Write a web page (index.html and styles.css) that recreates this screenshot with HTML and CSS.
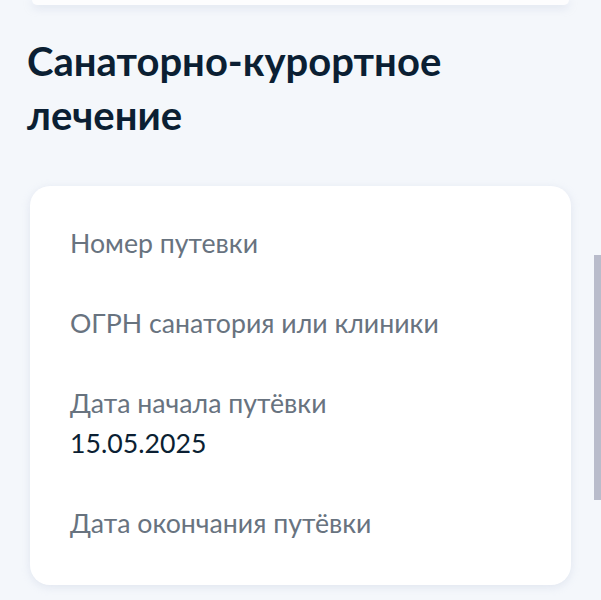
FILE: index.html
```html
<!DOCTYPE html>
<html lang="ru">
<head>
<meta charset="utf-8">
<link rel="stylesheet" href="styles.css">
</head>
<body>
<div class="prev-card"></div>
<h1 class="title">Санаторно-курортное лечение</h1>
<div class="card">
  <div class="field"><div class="label">Номер путевки</div></div>
  <div class="field"><div class="label">ОГРН санатория или клиники</div></div>
  <div class="field"><div class="label">Дата начала путёвки</div><div class="value">15.05.2025</div></div>
  <div class="field"><div class="label">Дата окончания путёвки</div></div>
</div>
<div class="scrollbar"></div>
</body>
</html>
```
FILE: styles.css
```css
html, body {
  margin: 0;
  padding: 0;
}
body {
  background: #f4f7fb;
  font-family: Lato, "Noto Sans", sans-serif;
  width: 601px;
  height: 600px;
  overflow: hidden;
  position: relative;
}
.prev-card {
  height: 5px;
  margin: 0 32px 0 32px;
  background: #fdfdfe;
  border-radius: 0 0 16px 16px;
  box-shadow: 0 2px 10px rgba(170, 180, 210, 0.4);
}
.title {
  margin: 29px 0 0 27px;
  font-size: 40px;
  line-height: 54px;
  font-weight: 700;
  color: #0b1f33;
  width: 460px;
}
.card {
  margin: 44px 30px 0 30px;
  background: #ffffff;
  border-radius: 20px;
  box-shadow: 0 2px 8px rgba(180, 190, 215, 0.3);
  padding: 37px 40px 42px 40px;
  display: flex;
  flex-direction: column;
  gap: 40px;
}
.label {
  font-size: 26.7px;
  line-height: 40px;
  color: #68737f;
}
.value {
  font-size: 26.7px;
  line-height: 40px;
  color: #0b1f33;
}
.scrollbar {
  position: absolute;
  right: 0;
  top: 255px;
  width: 7px;
  height: 245px;
  background: #b9bccb;
}
```
